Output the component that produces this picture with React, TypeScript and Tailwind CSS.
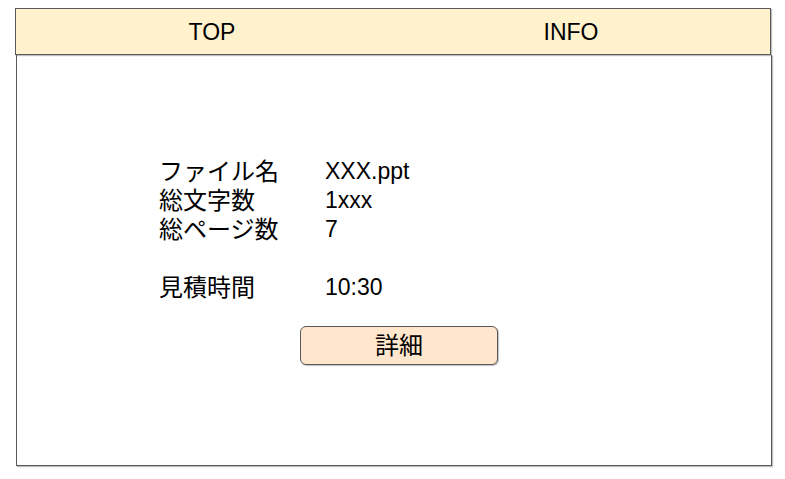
const rows: [string, string][] = [
  ["ファイル名", "XXX.ppt"],
  ["総文字数", "1xxx"],
  ["総ページ数", "7"],
];

const jp = "font-['Liberation_Sans','Noto_Sans_CJK_JP',sans-serif]";

export default function App() {
  return (
    <div className={`h-[479px] w-[785px] bg-white pt-[8px] text-[23px] text-black ${jp}`}>
      {/* Header tabs */}
      <header className="ml-[15px] flex h-[47px] w-[756px] items-center border border-[#5a5a5a] bg-[#fff2cc] pt-[2px] shadow-[1px_1px_1px_rgba(0,0,0,0.25)]">
        <div className="w-[392px] text-center leading-none">TOP</div>
        <div className="w-[326px] text-center leading-none">INFO</div>
      </header>

      {/* Body */}
      <main className="ml-[16px] h-[411px] w-[756px] border border-t-0 border-[#5a5a5a] pl-[142px] pt-[102px] shadow-[1px_1px_1px_rgba(0,0,0,0.25)]">
        <div className="grid grid-cols-[166px_1fr] leading-[29px]">
          {rows.map(([label, value]) => (
            <div key={label} className="contents">
              <span className="text-[24px]">{label}</span>
              <span>{value}</span>
            </div>
          ))}
          <span className="col-span-2 h-[29px]" />
          <span className="text-[24px]">見積時間</span>
          <span>10:30</span>
        </div>

        <button className="ml-[141px] mt-[24px] flex h-[39px] w-[198px] items-center justify-center rounded-[6px] border border-[#5a5a5a] bg-[#ffe6cc] text-[24px] leading-none shadow-[1px_1px_1px_rgba(0,0,0,0.25)]">
          詳細
        </button>
      </main>
    </div>
  );
}
